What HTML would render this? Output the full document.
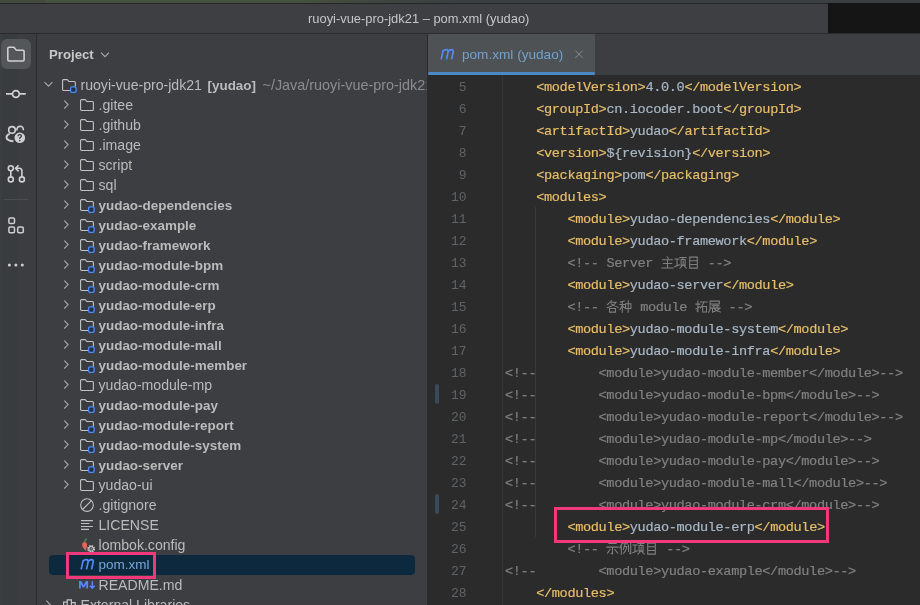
<!DOCTYPE html>
<html><head><meta charset="utf-8">
<style>
*{margin:0;padding:0;box-sizing:border-box}
html,body{width:920px;height:605px;overflow:hidden;background:#3c3e41}
body{position:relative;font-family:"Liberation Sans",sans-serif;-webkit-font-smoothing:antialiased}
#wrap{position:absolute;left:0;top:0;width:920px;height:605px;will-change:transform}
.abs{position:absolute}
svg{position:absolute;overflow:visible}
#topstrip{left:0;top:0;width:920px;height:3px;background:linear-gradient(90deg,#414a3c 0px,#414a3c 44px,#46523f 46px,#46523f 300px,#424a3e 340px,#3f4440 390px,#3c3f41 460px)}
#topline{left:0;top:3px;width:920px;height:1px;background:#262626}
#title{left:0;top:4px;width:920px;height:30px;background:#3d3f42;border-bottom:1px solid #2b2b2b}
#titletext{left:308px;top:12px;font-size:12.9px;color:#c6c6c6;white-space:pre;line-height:14px}
#blackrect{left:828px;top:3px;width:92px;height:30px;background:#151515}
#strip{left:0;top:34px;width:37px;height:571px;background:linear-gradient(90deg,#3c3e41 0,#3c3e41 2px,#393c3e 2px,#393c3e 18px,#3b3d40 18px);border-right:1px solid #2c2e2d}
#panel{left:37px;top:34px;width:391px;height:571px;background:#3c3e41;border-right:1px solid #2b2b2b}
#editor{left:428px;top:75px;width:492px;height:530px;background:#2b2b2b}
#tabbar{left:428px;top:34px;width:492px;height:41px;background:#3c3e41}
#tab{left:428px;top:34px;width:167px;height:41px;background:#4e5254}
#tabline{left:428px;top:72px;width:167px;height:3px;background:#4a88c7;border-radius:1.5px}
#tabtext{left:462px;top:47px;font-size:13.6px;line-height:16px;color:#74a1cc;white-space:pre}
#projhdr{left:49px;top:47px;font-size:13.2px;line-height:16px;font-weight:bold;color:#c8c8c8}
.row{position:absolute;height:20px;line-height:20px;font-size:14.1px;color:#bbbbbb;white-space:pre;top:0}
.b{font-weight:bold;font-size:13.45px}
.code{position:absolute;left:505px;font-family:"Liberation Mono",monospace;font-size:13.6px;letter-spacing:-0.36px;-webkit-text-stroke:0.2px;white-space:pre;line-height:22px;height:22px;color:#a9b7c6}
.ln{position:absolute;left:420px;width:46.5px;text-align:right;font-family:"Liberation Mono",monospace;font-size:13px;line-height:22px;height:22px;color:#606366}
.t{color:#e8bf6a}
.c{color:#808080}
</style></head><body><div id="wrap">
<div id="topstrip" class="abs"></div>
<div id="title" class="abs"></div>
<div id="topline" class="abs"></div>
<div id="titletext" class="abs">ruoyi-vue-pro-jdk21 – pom.xml (yudao)</div>
<div id="blackrect" class="abs"></div>
<div id="strip" class="abs"></div>
<div id="panel" class="abs"></div>
<div id="editor" class="abs"></div>
<div id="tabbar" class="abs"></div>
<div id="tab" class="abs"></div>
<div id="tabline" class="abs"></div>
<div id="tabtext" class="abs">pom.xml (yudao)</div>
<div id="projhdr" class="abs">Project</div>
<div class="abs" style="left:1px;top:39px;width:30px;height:30px;border-radius:6px;background:#53575a"></div>
<svg style="left:0;top:36px" width="36" height="36" viewBox="0 0 36 36"><path d="M7.8 12.4 Q7.8 11.2 9 11.2 L13.4 11.2 Q14 11.2 14.4 11.7 L15.8 13.6 Q16.2 14.2 17 14.2 L22.9 14.2 Q24.1 14.2 24.1 15.4 L24.1 23.7 Q24.1 24.9 22.9 24.9 L9 24.9 Q7.8 24.9 7.8 23.7 Z" fill="none" stroke="#d2d2d2" stroke-width="1.55" stroke-linejoin="round"/></svg>
<svg style="left:0;top:80px" width="36" height="30" viewBox="0 0 36 30"><path d="M6 13.9 H12.4 M19.4 13.9 H25.8" stroke="#d0d0d0" stroke-width="1.9"/><circle cx="15.9" cy="13.9" r="3.4" fill="none" stroke="#d0d0d0" stroke-width="1.75"/></svg>
<svg style="left:0;top:120px" width="36" height="30" viewBox="0 0 36 30"><circle cx="12" cy="9.9" r="3.3" fill="none" stroke="#d0d0d0" stroke-width="1.6"/><path d="M16.8 10.4 Q16.9 6.3 20.1 6.2 Q23.3 6.2 23.4 10.2" fill="none" stroke="#d0d0d0" stroke-width="1.6"/><path d="M9.8 13.8 Q6.4 14.6 6.5 17.6 Q6.8 20.6 13.4 21.2" fill="none" stroke="#d0d0d0" stroke-width="1.9"/><circle cx="19.8" cy="17.8" r="5.3" fill="#d0d0d0"/><path d="M18.1 16.2 Q18.1 14.6 19.8 14.6 Q21.5 14.6 21.5 16.1 Q21.5 17.2 19.8 17.8 V18.9" fill="none" stroke="#3c3f41" stroke-width="1.3"/><circle cx="19.8" cy="20.6" r="0.8" fill="#3c3f41"/></svg>
<svg style="left:0;top:160px" width="36" height="30" viewBox="0 0 36 30"><circle cx="10.8" cy="8.3" r="2.5" fill="none" stroke="#d0d0d0" stroke-width="1.6"/><circle cx="10.8" cy="19.4" r="2.5" fill="none" stroke="#d0d0d0" stroke-width="1.6"/><circle cx="21.9" cy="19.4" r="2.5" fill="none" stroke="#d0d0d0" stroke-width="1.6"/><path d="M10.8 10.8 V16.9" stroke="#d0d0d0" stroke-width="1.6"/><path d="M21.9 16.9 V11 Q21.9 8.3 19.2 8.3 H15.8 M18.6 5.2 L15.5 8.3 L18.6 11.4" fill="none" stroke="#d0d0d0" stroke-width="1.6"/></svg>
<div class="abs" style="left:4px;top:199px;width:24px;height:1px;background:#4b4e51"></div>
<svg style="left:0;top:210px" width="36" height="30" viewBox="0 0 36 30"><rect x="8.9" y="7.9" width="5.6" height="5.6" rx="1.3" fill="none" stroke="#cfcfcf" stroke-width="1.5"/><rect x="8.9" y="17.1" width="5.6" height="5.6" rx="1.3" fill="none" stroke="#cfcfcf" stroke-width="1.5"/><rect x="17.7" y="17.1" width="5.6" height="5.6" rx="1.3" fill="none" stroke="#cfcfcf" stroke-width="1.5"/></svg>
<svg style="left:0;top:255px" width="36" height="20" viewBox="0 0 36 20"><circle cx="9.4" cy="10" r="1.5" fill="#cfcfcf"/><circle cx="15.9" cy="10" r="1.5" fill="#cfcfcf"/><circle cx="22.3" cy="10" r="1.5" fill="#cfcfcf"/></svg>
<svg style="left:96px;top:46px" width="16" height="16" viewBox="0 0 16 16"><path d="M5 6.6 L9 10.6 L13 6.6" fill="none" stroke="#a8a8a8" stroke-width="1.2"/></svg>
<svg style="left:439.8px;top:48.1px" width="16" height="13" viewBox="0 0 16 13"><path d="M1.2 11.4 L3.3 1.9 M3 3.2 Q4.7 1.5 6.6 1.7 Q8.5 2 8.1 3.9 L6.5 11.4 M8.1 3.5 Q9.8 1.5 11.7 1.7 Q13.6 2 13.2 3.9 L11.6 11.4" fill="none" stroke="#548af7" stroke-width="1.7" stroke-linejoin="round"/></svg>
<svg style="left:570px;top:46px" width="16" height="16" viewBox="0 0 16 16"><path d="M5.4 4.7 L12.6 11.9 M12.6 4.7 L5.4 11.9" stroke="#8a8c8e" stroke-width="1"/></svg>
<div class="abs" style="left:0;top:0;width:427px;height:605px;overflow:hidden"><svg style="left:42px;top:79px" width="12" height="12" viewBox="0 0 12 12"><path d="M2.5 3.1 L6.45 7.2 L10.4 3.1" fill="none" stroke="#a8a8a8" stroke-width="1.1"/></svg>
<svg style="left:62px;top:79px" width="16" height="16" viewBox="0 0 16 16"><path d="M0.6 1.6 Q0.6 0.65 1.55 0.65 L4.9 0.65 Q5.4 0.65 5.7 1.05 L6.7 2.45 L12.4 2.45 Q13.35 2.45 13.35 3.4 L13.35 10.5 Q13.35 11.45 12.4 11.45 L1.55 11.45 Q0.6 11.45 0.6 10.5 Z" fill="#393b3e" stroke="#c4c4c4" stroke-width="1.1" stroke-linejoin="round"/><rect x="8.6" y="7.8" width="5.5" height="5.5" rx="1.2" fill="#22314a" stroke="#4f8cf5" stroke-width="1.3"/></svg>
<div class="row" style="left:80.5px;top:75px">ruoyi-vue-pro-jdk21</div><div class="row b" style="left:207.5px;top:76px">[yudao]</div><div class="row" style="left:262.5px;top:75px;font-size:14.4px;color:#8c8c8c">~/Java/ruoyi-vue-pro-jdk21</div>
<svg style="left:60px;top:99px" width="12" height="12" viewBox="0 0 12 12"><path d="M4.3 1.6 L8.1 5.55 L4.3 9.5" fill="none" stroke="#a8a8a8" stroke-width="1.1"/></svg>
<svg style="left:80px;top:99px" width="16" height="16" viewBox="0 0 16 16"><path d="M0.6 1.6 Q0.6 0.65 1.55 0.65 L4.9 0.65 Q5.4 0.65 5.7 1.05 L6.7 2.45 L12.4 2.45 Q13.35 2.45 13.35 3.4 L13.35 10.5 Q13.35 11.45 12.4 11.45 L1.55 11.45 Q0.6 11.45 0.6 10.5 Z" fill="#393b3e" stroke="#c4c4c4" stroke-width="1.1" stroke-linejoin="round"/></svg>
<div class="row" style="left:98.5px;top:95px">.gitee</div>
<svg style="left:60px;top:119px" width="12" height="12" viewBox="0 0 12 12"><path d="M4.3 1.6 L8.1 5.55 L4.3 9.5" fill="none" stroke="#a8a8a8" stroke-width="1.1"/></svg>
<svg style="left:80px;top:119px" width="16" height="16" viewBox="0 0 16 16"><path d="M0.6 1.6 Q0.6 0.65 1.55 0.65 L4.9 0.65 Q5.4 0.65 5.7 1.05 L6.7 2.45 L12.4 2.45 Q13.35 2.45 13.35 3.4 L13.35 10.5 Q13.35 11.45 12.4 11.45 L1.55 11.45 Q0.6 11.45 0.6 10.5 Z" fill="#393b3e" stroke="#c4c4c4" stroke-width="1.1" stroke-linejoin="round"/></svg>
<div class="row" style="left:98.5px;top:115px">.github</div>
<svg style="left:60px;top:139px" width="12" height="12" viewBox="0 0 12 12"><path d="M4.3 1.6 L8.1 5.55 L4.3 9.5" fill="none" stroke="#a8a8a8" stroke-width="1.1"/></svg>
<svg style="left:80px;top:139px" width="16" height="16" viewBox="0 0 16 16"><path d="M0.6 1.6 Q0.6 0.65 1.55 0.65 L4.9 0.65 Q5.4 0.65 5.7 1.05 L6.7 2.45 L12.4 2.45 Q13.35 2.45 13.35 3.4 L13.35 10.5 Q13.35 11.45 12.4 11.45 L1.55 11.45 Q0.6 11.45 0.6 10.5 Z" fill="#393b3e" stroke="#c4c4c4" stroke-width="1.1" stroke-linejoin="round"/></svg>
<div class="row" style="left:98.5px;top:135px">.image</div>
<svg style="left:60px;top:159px" width="12" height="12" viewBox="0 0 12 12"><path d="M4.3 1.6 L8.1 5.55 L4.3 9.5" fill="none" stroke="#a8a8a8" stroke-width="1.1"/></svg>
<svg style="left:80px;top:159px" width="16" height="16" viewBox="0 0 16 16"><path d="M0.6 1.6 Q0.6 0.65 1.55 0.65 L4.9 0.65 Q5.4 0.65 5.7 1.05 L6.7 2.45 L12.4 2.45 Q13.35 2.45 13.35 3.4 L13.35 10.5 Q13.35 11.45 12.4 11.45 L1.55 11.45 Q0.6 11.45 0.6 10.5 Z" fill="#393b3e" stroke="#c4c4c4" stroke-width="1.1" stroke-linejoin="round"/></svg>
<div class="row" style="left:98.5px;top:155px">script</div>
<svg style="left:60px;top:179px" width="12" height="12" viewBox="0 0 12 12"><path d="M4.3 1.6 L8.1 5.55 L4.3 9.5" fill="none" stroke="#a8a8a8" stroke-width="1.1"/></svg>
<svg style="left:80px;top:179px" width="16" height="16" viewBox="0 0 16 16"><path d="M0.6 1.6 Q0.6 0.65 1.55 0.65 L4.9 0.65 Q5.4 0.65 5.7 1.05 L6.7 2.45 L12.4 2.45 Q13.35 2.45 13.35 3.4 L13.35 10.5 Q13.35 11.45 12.4 11.45 L1.55 11.45 Q0.6 11.45 0.6 10.5 Z" fill="#393b3e" stroke="#c4c4c4" stroke-width="1.1" stroke-linejoin="round"/></svg>
<div class="row" style="left:98.5px;top:175px">sql</div>
<svg style="left:60px;top:199px" width="12" height="12" viewBox="0 0 12 12"><path d="M4.3 1.6 L8.1 5.55 L4.3 9.5" fill="none" stroke="#a8a8a8" stroke-width="1.1"/></svg>
<svg style="left:80px;top:199px" width="16" height="16" viewBox="0 0 16 16"><path d="M0.6 1.6 Q0.6 0.65 1.55 0.65 L4.9 0.65 Q5.4 0.65 5.7 1.05 L6.7 2.45 L12.4 2.45 Q13.35 2.45 13.35 3.4 L13.35 10.5 Q13.35 11.45 12.4 11.45 L1.55 11.45 Q0.6 11.45 0.6 10.5 Z" fill="#393b3e" stroke="#c4c4c4" stroke-width="1.1" stroke-linejoin="round"/><rect x="8.6" y="7.8" width="5.5" height="5.5" rx="1.2" fill="#22314a" stroke="#4f8cf5" stroke-width="1.3"/></svg>
<div class="row b" style="left:98.5px;top:196px">yudao-dependencies</div>
<svg style="left:60px;top:219px" width="12" height="12" viewBox="0 0 12 12"><path d="M4.3 1.6 L8.1 5.55 L4.3 9.5" fill="none" stroke="#a8a8a8" stroke-width="1.1"/></svg>
<svg style="left:80px;top:219px" width="16" height="16" viewBox="0 0 16 16"><path d="M0.6 1.6 Q0.6 0.65 1.55 0.65 L4.9 0.65 Q5.4 0.65 5.7 1.05 L6.7 2.45 L12.4 2.45 Q13.35 2.45 13.35 3.4 L13.35 10.5 Q13.35 11.45 12.4 11.45 L1.55 11.45 Q0.6 11.45 0.6 10.5 Z" fill="#393b3e" stroke="#c4c4c4" stroke-width="1.1" stroke-linejoin="round"/><rect x="8.6" y="7.8" width="5.5" height="5.5" rx="1.2" fill="#22314a" stroke="#4f8cf5" stroke-width="1.3"/></svg>
<div class="row b" style="left:98.5px;top:216px">yudao-example</div>
<svg style="left:60px;top:239px" width="12" height="12" viewBox="0 0 12 12"><path d="M4.3 1.6 L8.1 5.55 L4.3 9.5" fill="none" stroke="#a8a8a8" stroke-width="1.1"/></svg>
<svg style="left:80px;top:239px" width="16" height="16" viewBox="0 0 16 16"><path d="M0.6 1.6 Q0.6 0.65 1.55 0.65 L4.9 0.65 Q5.4 0.65 5.7 1.05 L6.7 2.45 L12.4 2.45 Q13.35 2.45 13.35 3.4 L13.35 10.5 Q13.35 11.45 12.4 11.45 L1.55 11.45 Q0.6 11.45 0.6 10.5 Z" fill="#393b3e" stroke="#c4c4c4" stroke-width="1.1" stroke-linejoin="round"/><rect x="8.6" y="7.8" width="5.5" height="5.5" rx="1.2" fill="#22314a" stroke="#4f8cf5" stroke-width="1.3"/></svg>
<div class="row b" style="left:98.5px;top:236px">yudao-framework</div>
<svg style="left:60px;top:259px" width="12" height="12" viewBox="0 0 12 12"><path d="M4.3 1.6 L8.1 5.55 L4.3 9.5" fill="none" stroke="#a8a8a8" stroke-width="1.1"/></svg>
<svg style="left:80px;top:259px" width="16" height="16" viewBox="0 0 16 16"><path d="M0.6 1.6 Q0.6 0.65 1.55 0.65 L4.9 0.65 Q5.4 0.65 5.7 1.05 L6.7 2.45 L12.4 2.45 Q13.35 2.45 13.35 3.4 L13.35 10.5 Q13.35 11.45 12.4 11.45 L1.55 11.45 Q0.6 11.45 0.6 10.5 Z" fill="#393b3e" stroke="#c4c4c4" stroke-width="1.1" stroke-linejoin="round"/><rect x="8.6" y="7.8" width="5.5" height="5.5" rx="1.2" fill="#22314a" stroke="#4f8cf5" stroke-width="1.3"/></svg>
<div class="row b" style="left:98.5px;top:256px">yudao-module-bpm</div>
<svg style="left:60px;top:279px" width="12" height="12" viewBox="0 0 12 12"><path d="M4.3 1.6 L8.1 5.55 L4.3 9.5" fill="none" stroke="#a8a8a8" stroke-width="1.1"/></svg>
<svg style="left:80px;top:279px" width="16" height="16" viewBox="0 0 16 16"><path d="M0.6 1.6 Q0.6 0.65 1.55 0.65 L4.9 0.65 Q5.4 0.65 5.7 1.05 L6.7 2.45 L12.4 2.45 Q13.35 2.45 13.35 3.4 L13.35 10.5 Q13.35 11.45 12.4 11.45 L1.55 11.45 Q0.6 11.45 0.6 10.5 Z" fill="#393b3e" stroke="#c4c4c4" stroke-width="1.1" stroke-linejoin="round"/><rect x="8.6" y="7.8" width="5.5" height="5.5" rx="1.2" fill="#22314a" stroke="#4f8cf5" stroke-width="1.3"/></svg>
<div class="row b" style="left:98.5px;top:276px">yudao-module-crm</div>
<svg style="left:60px;top:299px" width="12" height="12" viewBox="0 0 12 12"><path d="M4.3 1.6 L8.1 5.55 L4.3 9.5" fill="none" stroke="#a8a8a8" stroke-width="1.1"/></svg>
<svg style="left:80px;top:299px" width="16" height="16" viewBox="0 0 16 16"><path d="M0.6 1.6 Q0.6 0.65 1.55 0.65 L4.9 0.65 Q5.4 0.65 5.7 1.05 L6.7 2.45 L12.4 2.45 Q13.35 2.45 13.35 3.4 L13.35 10.5 Q13.35 11.45 12.4 11.45 L1.55 11.45 Q0.6 11.45 0.6 10.5 Z" fill="#393b3e" stroke="#c4c4c4" stroke-width="1.1" stroke-linejoin="round"/><rect x="8.6" y="7.8" width="5.5" height="5.5" rx="1.2" fill="#22314a" stroke="#4f8cf5" stroke-width="1.3"/></svg>
<div class="row b" style="left:98.5px;top:296px">yudao-module-erp</div>
<svg style="left:60px;top:319px" width="12" height="12" viewBox="0 0 12 12"><path d="M4.3 1.6 L8.1 5.55 L4.3 9.5" fill="none" stroke="#a8a8a8" stroke-width="1.1"/></svg>
<svg style="left:80px;top:319px" width="16" height="16" viewBox="0 0 16 16"><path d="M0.6 1.6 Q0.6 0.65 1.55 0.65 L4.9 0.65 Q5.4 0.65 5.7 1.05 L6.7 2.45 L12.4 2.45 Q13.35 2.45 13.35 3.4 L13.35 10.5 Q13.35 11.45 12.4 11.45 L1.55 11.45 Q0.6 11.45 0.6 10.5 Z" fill="#393b3e" stroke="#c4c4c4" stroke-width="1.1" stroke-linejoin="round"/><rect x="8.6" y="7.8" width="5.5" height="5.5" rx="1.2" fill="#22314a" stroke="#4f8cf5" stroke-width="1.3"/></svg>
<div class="row b" style="left:98.5px;top:316px">yudao-module-infra</div>
<svg style="left:60px;top:339px" width="12" height="12" viewBox="0 0 12 12"><path d="M4.3 1.6 L8.1 5.55 L4.3 9.5" fill="none" stroke="#a8a8a8" stroke-width="1.1"/></svg>
<svg style="left:80px;top:339px" width="16" height="16" viewBox="0 0 16 16"><path d="M0.6 1.6 Q0.6 0.65 1.55 0.65 L4.9 0.65 Q5.4 0.65 5.7 1.05 L6.7 2.45 L12.4 2.45 Q13.35 2.45 13.35 3.4 L13.35 10.5 Q13.35 11.45 12.4 11.45 L1.55 11.45 Q0.6 11.45 0.6 10.5 Z" fill="#393b3e" stroke="#c4c4c4" stroke-width="1.1" stroke-linejoin="round"/><rect x="8.6" y="7.8" width="5.5" height="5.5" rx="1.2" fill="#22314a" stroke="#4f8cf5" stroke-width="1.3"/></svg>
<div class="row b" style="left:98.5px;top:336px">yudao-module-mall</div>
<svg style="left:60px;top:359px" width="12" height="12" viewBox="0 0 12 12"><path d="M4.3 1.6 L8.1 5.55 L4.3 9.5" fill="none" stroke="#a8a8a8" stroke-width="1.1"/></svg>
<svg style="left:80px;top:359px" width="16" height="16" viewBox="0 0 16 16"><path d="M0.6 1.6 Q0.6 0.65 1.55 0.65 L4.9 0.65 Q5.4 0.65 5.7 1.05 L6.7 2.45 L12.4 2.45 Q13.35 2.45 13.35 3.4 L13.35 10.5 Q13.35 11.45 12.4 11.45 L1.55 11.45 Q0.6 11.45 0.6 10.5 Z" fill="#393b3e" stroke="#c4c4c4" stroke-width="1.1" stroke-linejoin="round"/><rect x="8.6" y="7.8" width="5.5" height="5.5" rx="1.2" fill="#22314a" stroke="#4f8cf5" stroke-width="1.3"/></svg>
<div class="row b" style="left:98.5px;top:356px">yudao-module-member</div>
<svg style="left:60px;top:379px" width="12" height="12" viewBox="0 0 12 12"><path d="M4.3 1.6 L8.1 5.55 L4.3 9.5" fill="none" stroke="#a8a8a8" stroke-width="1.1"/></svg>
<svg style="left:80px;top:379px" width="16" height="16" viewBox="0 0 16 16"><path d="M0.6 1.6 Q0.6 0.65 1.55 0.65 L4.9 0.65 Q5.4 0.65 5.7 1.05 L6.7 2.45 L12.4 2.45 Q13.35 2.45 13.35 3.4 L13.35 10.5 Q13.35 11.45 12.4 11.45 L1.55 11.45 Q0.6 11.45 0.6 10.5 Z" fill="#393b3e" stroke="#c4c4c4" stroke-width="1.1" stroke-linejoin="round"/></svg>
<div class="row" style="left:98.5px;top:375px">yudao-module-mp</div>
<svg style="left:60px;top:399px" width="12" height="12" viewBox="0 0 12 12"><path d="M4.3 1.6 L8.1 5.55 L4.3 9.5" fill="none" stroke="#a8a8a8" stroke-width="1.1"/></svg>
<svg style="left:80px;top:399px" width="16" height="16" viewBox="0 0 16 16"><path d="M0.6 1.6 Q0.6 0.65 1.55 0.65 L4.9 0.65 Q5.4 0.65 5.7 1.05 L6.7 2.45 L12.4 2.45 Q13.35 2.45 13.35 3.4 L13.35 10.5 Q13.35 11.45 12.4 11.45 L1.55 11.45 Q0.6 11.45 0.6 10.5 Z" fill="#393b3e" stroke="#c4c4c4" stroke-width="1.1" stroke-linejoin="round"/><rect x="8.6" y="7.8" width="5.5" height="5.5" rx="1.2" fill="#22314a" stroke="#4f8cf5" stroke-width="1.3"/></svg>
<div class="row b" style="left:98.5px;top:396px">yudao-module-pay</div>
<svg style="left:60px;top:419px" width="12" height="12" viewBox="0 0 12 12"><path d="M4.3 1.6 L8.1 5.55 L4.3 9.5" fill="none" stroke="#a8a8a8" stroke-width="1.1"/></svg>
<svg style="left:80px;top:419px" width="16" height="16" viewBox="0 0 16 16"><path d="M0.6 1.6 Q0.6 0.65 1.55 0.65 L4.9 0.65 Q5.4 0.65 5.7 1.05 L6.7 2.45 L12.4 2.45 Q13.35 2.45 13.35 3.4 L13.35 10.5 Q13.35 11.45 12.4 11.45 L1.55 11.45 Q0.6 11.45 0.6 10.5 Z" fill="#393b3e" stroke="#c4c4c4" stroke-width="1.1" stroke-linejoin="round"/><rect x="8.6" y="7.8" width="5.5" height="5.5" rx="1.2" fill="#22314a" stroke="#4f8cf5" stroke-width="1.3"/></svg>
<div class="row b" style="left:98.5px;top:416px">yudao-module-report</div>
<svg style="left:60px;top:439px" width="12" height="12" viewBox="0 0 12 12"><path d="M4.3 1.6 L8.1 5.55 L4.3 9.5" fill="none" stroke="#a8a8a8" stroke-width="1.1"/></svg>
<svg style="left:80px;top:439px" width="16" height="16" viewBox="0 0 16 16"><path d="M0.6 1.6 Q0.6 0.65 1.55 0.65 L4.9 0.65 Q5.4 0.65 5.7 1.05 L6.7 2.45 L12.4 2.45 Q13.35 2.45 13.35 3.4 L13.35 10.5 Q13.35 11.45 12.4 11.45 L1.55 11.45 Q0.6 11.45 0.6 10.5 Z" fill="#393b3e" stroke="#c4c4c4" stroke-width="1.1" stroke-linejoin="round"/><rect x="8.6" y="7.8" width="5.5" height="5.5" rx="1.2" fill="#22314a" stroke="#4f8cf5" stroke-width="1.3"/></svg>
<div class="row b" style="left:98.5px;top:436px">yudao-module-system</div>
<svg style="left:60px;top:459px" width="12" height="12" viewBox="0 0 12 12"><path d="M4.3 1.6 L8.1 5.55 L4.3 9.5" fill="none" stroke="#a8a8a8" stroke-width="1.1"/></svg>
<svg style="left:80px;top:459px" width="16" height="16" viewBox="0 0 16 16"><path d="M0.6 1.6 Q0.6 0.65 1.55 0.65 L4.9 0.65 Q5.4 0.65 5.7 1.05 L6.7 2.45 L12.4 2.45 Q13.35 2.45 13.35 3.4 L13.35 10.5 Q13.35 11.45 12.4 11.45 L1.55 11.45 Q0.6 11.45 0.6 10.5 Z" fill="#393b3e" stroke="#c4c4c4" stroke-width="1.1" stroke-linejoin="round"/><rect x="8.6" y="7.8" width="5.5" height="5.5" rx="1.2" fill="#22314a" stroke="#4f8cf5" stroke-width="1.3"/></svg>
<div class="row b" style="left:98.5px;top:456px">yudao-server</div>
<svg style="left:60px;top:479px" width="12" height="12" viewBox="0 0 12 12"><path d="M4.3 1.6 L8.1 5.55 L4.3 9.5" fill="none" stroke="#a8a8a8" stroke-width="1.1"/></svg>
<svg style="left:80px;top:479px" width="16" height="16" viewBox="0 0 16 16"><path d="M0.6 1.6 Q0.6 0.65 1.55 0.65 L4.9 0.65 Q5.4 0.65 5.7 1.05 L6.7 2.45 L12.4 2.45 Q13.35 2.45 13.35 3.4 L13.35 10.5 Q13.35 11.45 12.4 11.45 L1.55 11.45 Q0.6 11.45 0.6 10.5 Z" fill="#393b3e" stroke="#c4c4c4" stroke-width="1.1" stroke-linejoin="round"/></svg>
<div class="row" style="left:98.5px;top:475px">yudao-ui</div>
<svg style="left:80px;top:498px" width="16" height="16" viewBox="0 0 16 16"><circle cx="7" cy="7.1" r="6.3" fill="none" stroke="#c0c0c0" stroke-width="1.1"/><path d="M2.6 11.5 L11.4 2.7" stroke="#c0c0c0" stroke-width="1.1"/></svg>
<div class="row" style="left:98.5px;top:495px">.gitignore</div>
<svg style="left:80px;top:518px" width="16" height="16" viewBox="0 0 16 16"><path d="M1 2.6 H12.9 M1 5.5 H9.4 M1 8.5 H12.9 M1 11.4 H9" stroke="#c0c0c0" stroke-width="1.1"/></svg>
<div class="row" style="left:98.5px;top:515px">LICENSE</div>
<svg style="left:80px;top:538px" width="18" height="18" viewBox="0 0 18 18"><path d="M4.6 4.4 Q4.5 2 6.8 0.6" fill="none" stroke="#4f8f4c" stroke-width="1.3"/><path d="M4.5 3.9 Q7.2 3.9 7.1 7.4 Q7 10.4 5.9 12.9 Q5 12.2 4.2 11 Q2.1 8.8 2.1 6.9 Q2.2 3.9 4.5 3.9 Z" fill="#de6656"/><circle cx="11.1" cy="10.9" r="4.6" fill="#3c3e41"/><circle cx="11.1" cy="10.9" r="2.9" fill="none" stroke="#c8c8c8" stroke-width="2.1" stroke-dasharray="1.5 0.78"/><circle cx="11.1" cy="10.9" r="2.3" fill="none" stroke="#c8c8c8" stroke-width="0.9"/><rect x="10.4" y="10.2" width="1.4" height="1.4" fill="#a0a0a0"/></svg>
<div class="row" style="left:98.5px;top:535px">lombok.config</div>
<div class="abs" style="left:49px;top:555px;width:366px;height:20px;background:#0d293e;border-radius:4px"></div>
<svg style="left:79.8px;top:557.8px" width="16" height="13" viewBox="0 0 16 13"><path d="M1.2 11.4 L3.3 1.9 M3 3.2 Q4.7 1.5 6.6 1.7 Q8.5 2 8.1 3.9 L6.5 11.4 M8.1 3.5 Q9.8 1.5 11.7 1.7 Q13.6 2 13.2 3.9 L11.6 11.4" fill="none" stroke="#548af7" stroke-width="1.7" stroke-linejoin="round"/></svg>
<div class="row" style="left:98.5px;top:555px;font-size:13.5px;color:#78a6d6">pom.xml</div>
<svg style="left:79px;top:581.4px" width="18" height="9" viewBox="0 0 18 9"><path d="M0 7.6 V0 H2.3 L4.55 4.3 L6.8 0 H9.1 V7.6 H7.3 V2.9 L5.3 6.5 H3.8 L1.8 2.9 V7.6 Z" fill="#548af7"/><path d="M13.3 0.2 V7 M10.9 4.7 L13.3 7.1 L15.7 4.7" fill="none" stroke="#548af7" stroke-width="1.5"/></svg>
<div class="row" style="left:98.5px;top:575px">README.md</div>
<svg style="left:42px;top:599px" width="12" height="12" viewBox="0 0 12 12"><path d="M4.3 1.6 L8.1 5.55 L4.3 9.5" fill="none" stroke="#a8a8a8" stroke-width="1.1"/></svg>
<svg style="left:62px;top:598px" width="16" height="16" viewBox="0 0 16 16"><path d="M1.6 14 V4.2 H5.2 V14 M5.2 14 V1.9 H9.4 V14 M9.4 14 V4.6 H13.2 V14" fill="none" stroke="#c4c4c4" stroke-width="1.2"/></svg>
<div class="row" style="left:80.5px;top:595px">External Libraries</div></div>
<div class="abs" style="left:502px;top:75px;width:1px;height:530px;background:#343434"></div>
<div class="abs" style="left:534.5px;top:207px;width:1px;height:330px;background:#393939"></div>
<div class="ln" style="top:77px">5</div>
<div class="code" style="top:77px">    <span class="t">&lt;modelVersion&gt;</span>4.0.0<span class="t">&lt;/modelVersion&gt;</span></div>
<div class="ln" style="top:99px">6</div>
<div class="code" style="top:99px">    <span class="t">&lt;groupId&gt;</span>cn.iocoder.boot<span class="t">&lt;/groupId&gt;</span></div>
<div class="ln" style="top:121px">7</div>
<div class="code" style="top:121px">    <span class="t">&lt;artifactId&gt;</span>yudao<span class="t">&lt;/artifactId&gt;</span></div>
<div class="ln" style="top:143px">8</div>
<div class="code" style="top:143px">    <span class="t">&lt;version&gt;</span>${revision}<span class="t">&lt;/version&gt;</span></div>
<div class="ln" style="top:165px">9</div>
<div class="code" style="top:165px">    <span class="t">&lt;packaging&gt;</span>pom<span class="t">&lt;/packaging&gt;</span></div>
<div class="ln" style="top:187px">10</div>
<div class="code" style="top:187px">    <span class="t">&lt;modules&gt;</span></div>
<div class="ln" style="top:209px">11</div>
<div class="code" style="top:209px">        <span class="t">&lt;module&gt;</span>yudao-dependencies<span class="t">&lt;/module&gt;</span></div>
<div class="ln" style="top:231px">12</div>
<div class="code" style="top:231px">        <span class="t">&lt;module&gt;</span>yudao-framework<span class="t">&lt;/module&gt;</span></div>
<div class="ln" style="top:253px">13</div>
<div class="code" style="top:253px">        <span class="c">&lt;!-- Server <svg class="cj" width="13" height="13" viewBox="-0.5 -0.5 13 13" style="position:relative;display:inline-block;vertical-align:-2px"><path d="M5.6 0.4 L6.8 1.8 M1.2 3.2 H10.8 M1.8 7 H10.2 M0.4 11.4 H11.6 M6 3.2 V11.4" fill="none" stroke="#808080" stroke-width="1.05" stroke-linecap="square"/></svg><svg class="cj" width="13" height="13" viewBox="-0.5 -0.5 13 13" style="position:relative;display:inline-block;vertical-align:-2px"><path d="M0.4 2.4 H4.6 M2.5 2.4 V9.2 M0.2 10.2 L4.8 8.2 M5.4 1 H11.6 M8.6 1 L8 2.8 M6.6 3 H10.6 V8.6 H6.6 Z M8.6 4.6 V8.2 M7.6 9.2 L5.4 11.6 M9.6 9.2 L11.8 11.6" fill="none" stroke="#808080" stroke-width="1.05" stroke-linecap="square"/></svg><svg class="cj" width="13" height="13" viewBox="-0.5 -0.5 13 13" style="position:relative;display:inline-block;vertical-align:-2px"><path d="M2.2 0.6 H9.8 V11.6 H2.2 Z M2.2 4.2 H9.8 M2.2 7.9 H9.8" fill="none" stroke="#808080" stroke-width="1.05" stroke-linecap="square"/></svg> --&gt;</span></div>
<div class="ln" style="top:275px">14</div>
<div class="code" style="top:275px">        <span class="t">&lt;module&gt;</span>yudao-server<span class="t">&lt;/module&gt;</span></div>
<div class="ln" style="top:297px">15</div>
<div class="code" style="top:297px">        <span class="c">&lt;!-- <svg class="cj" width="13" height="13" viewBox="-0.5 -0.5 13 13" style="position:relative;display:inline-block;vertical-align:-2px"><path d="M5 0.2 L1 4.2 M4 1.8 H9.6 Q7 5.8 0.6 7.2 M4.8 3.4 Q8 6 11.6 6.8 M3 8 H9 V11.6 H3 Z" fill="none" stroke="#808080" stroke-width="1.05" stroke-linecap="square"/></svg><svg class="cj" width="13" height="13" viewBox="-0.5 -0.5 13 13" style="position:relative;display:inline-block;vertical-align:-2px"><path d="M0.8 1.6 L4.8 0.4 M0.4 4 H5 M2.8 1.2 V11.8 M2.8 5 L0.4 9.2 M2.8 5.2 L5 7.4 M6 3.2 H11.4 V8 H6 Z M8.7 0.2 V11.8" fill="none" stroke="#808080" stroke-width="1.05" stroke-linecap="square"/></svg> module <svg class="cj" width="13" height="13" viewBox="-0.5 -0.5 13 13" style="position:relative;display:inline-block;vertical-align:-2px"><path d="M0.4 3.6 H4.4 M2.4 0.4 V11 L1.4 10.4 M0.4 8.4 L4.4 6.2 M5 1.4 H11.6 M8.4 1.4 Q7.2 5 5.2 7.4 M7.2 6 H11 V11.4 H7.2 Z" fill="none" stroke="#808080" stroke-width="1.05" stroke-linecap="square"/></svg><svg class="cj" width="13" height="13" viewBox="-0.5 -0.5 13 13" style="position:relative;display:inline-block;vertical-align:-2px"><path d="M1.6 0.6 H10.8 V3.4 H1.6 M1.6 0.6 V7.4 Q1.6 10 0.2 11.8 M3.6 5.2 H10.4 M2.6 7.6 H11.6 M5.4 3.8 V7.6 M8.6 3.8 V7.6 M4 8 V11.6 L7 10.4 M6 8.4 Q8 11 11.8 11.6 M10.6 8.6 L8.6 10" fill="none" stroke="#808080" stroke-width="1.05" stroke-linecap="square"/></svg> --&gt;</span></div>
<div class="ln" style="top:319px">16</div>
<div class="code" style="top:319px">        <span class="t">&lt;module&gt;</span>yudao-module-system<span class="t">&lt;/module&gt;</span></div>
<div class="ln" style="top:341px">17</div>
<div class="code" style="top:341px">        <span class="t">&lt;module&gt;</span>yudao-module-infra<span class="t">&lt;/module&gt;</span></div>
<div class="ln" style="top:363px">18</div>
<div class="code" style="top:363px"><span class="c">&lt;!--        &lt;module&gt;yudao-module-member&lt;/module&gt;--&gt;</span></div>
<div class="ln" style="top:385px">19</div>
<div class="code" style="top:385px"><span class="c">&lt;!--        &lt;module&gt;yudao-module-bpm&lt;/module&gt;--&gt;</span></div>
<div class="ln" style="top:407px">20</div>
<div class="code" style="top:407px"><span class="c">&lt;!--        &lt;module&gt;yudao-module-report&lt;/module&gt;--&gt;</span></div>
<div class="ln" style="top:429px">21</div>
<div class="code" style="top:429px"><span class="c">&lt;!--        &lt;module&gt;yudao-module-mp&lt;/module&gt;--&gt;</span></div>
<div class="ln" style="top:451px">22</div>
<div class="code" style="top:451px"><span class="c">&lt;!--        &lt;module&gt;yudao-module-pay&lt;/module&gt;--&gt;</span></div>
<div class="ln" style="top:473px">23</div>
<div class="code" style="top:473px"><span class="c">&lt;!--        &lt;module&gt;yudao-module-mall&lt;/module&gt;--&gt;</span></div>
<div class="ln" style="top:495px">24</div>
<div class="code" style="top:495px"><span class="c">&lt;!--        &lt;module&gt;yudao-module-crm&lt;/module&gt;--&gt;</span></div>
<div class="ln" style="top:517px">25</div>
<div class="code" style="top:517px">        <span class="t">&lt;module&gt;</span>yudao-module-erp<span class="t">&lt;/module&gt;</span></div>
<div class="ln" style="top:539px">26</div>
<div class="code" style="top:539px">        <span class="c">&lt;!-- <svg class="cj" width="13" height="13" viewBox="-0.5 -0.5 13 13" style="position:relative;display:inline-block;vertical-align:-2px"><path d="M2.4 1 H9.6 M0.4 4.6 H11.6 M6 4.6 V11.4 L4.8 10.8 M3.6 7 L1 10.6 M8.4 7 L11.2 10.6" fill="none" stroke="#808080" stroke-width="1.05" stroke-linecap="square"/></svg><svg class="cj" width="13" height="13" viewBox="-0.5 -0.5 13 13" style="position:relative;display:inline-block;vertical-align:-2px"><path d="M2.8 0.2 L0.3 5.4 M1.8 3.6 V11.8 M3.6 1.2 H8 M5.8 1.2 L3.8 7 M4.6 4 H7.4 Q6.6 8.6 4 10.8 M9 2.6 V9 M11.2 0.4 V11.4 L10.2 10.8" fill="none" stroke="#808080" stroke-width="1.05" stroke-linecap="square"/></svg><svg class="cj" width="13" height="13" viewBox="-0.5 -0.5 13 13" style="position:relative;display:inline-block;vertical-align:-2px"><path d="M0.4 2.4 H4.6 M2.5 2.4 V9.2 M0.2 10.2 L4.8 8.2 M5.4 1 H11.6 M8.6 1 L8 2.8 M6.6 3 H10.6 V8.6 H6.6 Z M8.6 4.6 V8.2 M7.6 9.2 L5.4 11.6 M9.6 9.2 L11.8 11.6" fill="none" stroke="#808080" stroke-width="1.05" stroke-linecap="square"/></svg><svg class="cj" width="13" height="13" viewBox="-0.5 -0.5 13 13" style="position:relative;display:inline-block;vertical-align:-2px"><path d="M2.2 0.6 H9.8 V11.6 H2.2 Z M2.2 4.2 H9.8 M2.2 7.9 H9.8" fill="none" stroke="#808080" stroke-width="1.05" stroke-linecap="square"/></svg> --&gt;</span></div>
<div class="ln" style="top:561px">27</div>
<div class="code" style="top:561px"><span class="c">&lt;!--        &lt;module&gt;yudao-example&lt;/module&gt;--&gt;</span></div>
<div class="ln" style="top:583px">28</div>
<div class="code" style="top:583px">    <span class="t">&lt;/modules&gt;</span></div>
<div class="abs" style="left:435px;top:384px;width:4px;height:20px;border-radius:2px;background:#384a5a"></div>
<div class="abs" style="left:435px;top:494px;width:4px;height:20px;border-radius:2px;background:#384a5a"></div>
<div class="abs" style="left:66px;top:552px;width:90px;height:27px;border:3px solid #f0387a"></div>
<div class="abs" style="left:554px;top:507px;width:275px;height:36px;border:3.4px solid #f0387a"></div>
</div></body></html>
